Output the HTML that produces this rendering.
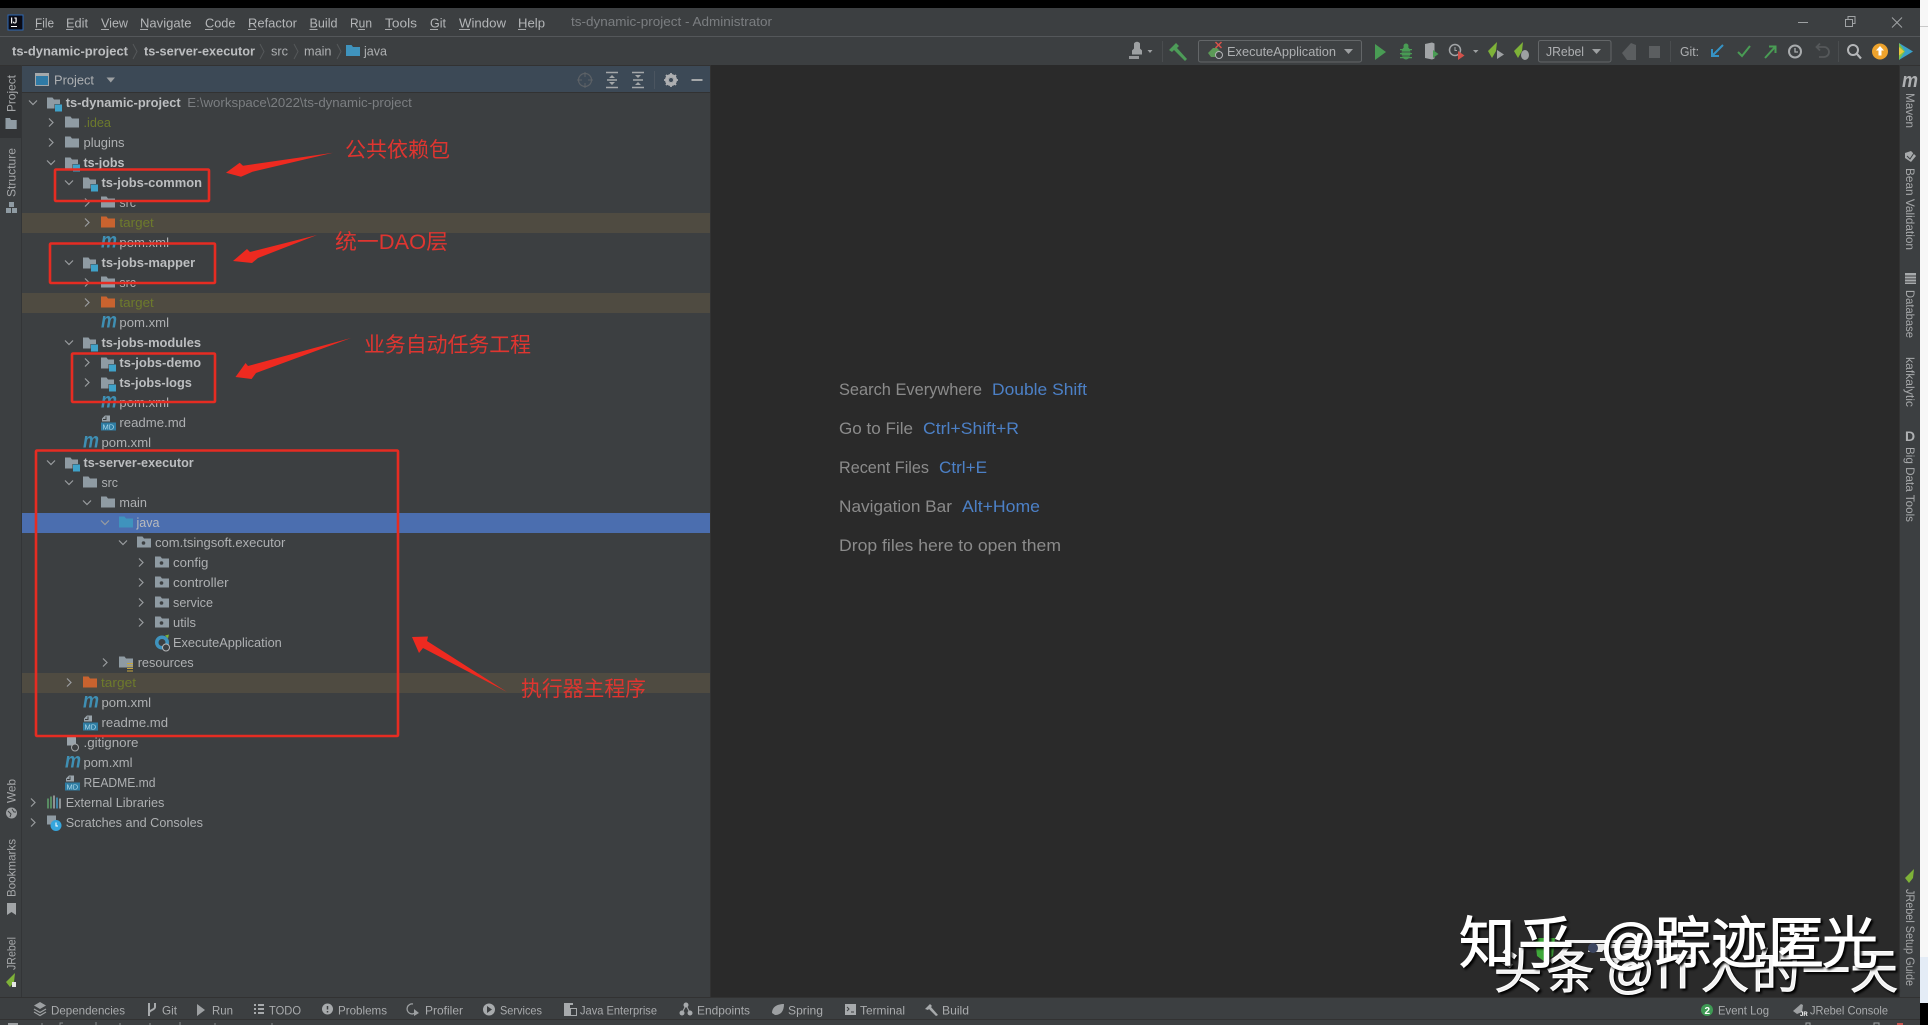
<!DOCTYPE html>
<html lang="zh"><head><meta charset="utf-8"><title>ts-dynamic-project</title>
<style>
html,body{margin:0;padding:0;background:#000;width:1928px;height:1025px;overflow:hidden}
svg{display:block}
text{font-family:"Liberation Sans","Noto Sans CJK SC",sans-serif;white-space:pre}
.t{font-size:13px;fill:#aeb0b2}
.b{font-size:13px;fill:#bcbec0;font-weight:bold}
.g{font-size:13px;fill:#7b7e81}
.o{font-size:13px;fill:#6d7a2c}
.w{font-size:13px;fill:#b9bbbd}
.m{font-size:13px;fill:#b4b6b8}
.s{font-size:12px;fill:#a6a8aa}
.k{font-size:12px;fill:#a9abad}
.c{font-size:17px;fill:#8b8b8b}
.h{font-size:17px;fill:#4c80c6}
.r{font-size:21px;fill:#df3530}
.z{fill:#fff;stroke:#fff;stroke-width:1;filter:drop-shadow(2px 2px 1px #000)}
.cv{fill:none;stroke:#9a9da0;stroke-width:1.2}
</style></head>
<body>
<svg xmlns="http://www.w3.org/2000/svg" width="1928" height="1025" viewBox="0 0 1928 1025">
<defs>
<g id="f"><path d="M0 0h5.5l1.5 2h7v9H0z" fill="#8f9ba3"/></g>
<g id="fo"><path d="M0 0h5.5l1.5 2h7v9H0z" fill="#c9632f"/></g>
<g id="fb"><path d="M0 0h5.5l1.5 2h7v9H0z" fill="#3f93bd"/></g>
<g id="mod"><path d="M0 0h5.5l1.5 2h6v9H0z" fill="#8f9ba3"/><rect x="7.5" y="6.5" width="8" height="8" fill="#3c3f41"/><rect x="8" y="7" width="7" height="7" fill="#3fa2c9"/></g>
<g id="pk"><path d="M0 0h5.5l1.5 2h7v9H0z" fill="#8f9ba3"/><circle cx="6.5" cy="6.5" r="1.8" fill="#3c3f41"/></g>
<g id="d"><text x="-1" y="11" textLength="16" lengthAdjust="spacingAndGlyphs" style="font-size:21px;font-weight:bold;font-style:italic;fill:#3f8fb3">m</text></g>
<g id="md"><path d="M4 0h5v6H1V3z" fill="#9aa4ab"/><path d="M5 1v3H2" fill="none" stroke="#3c3f41"/><rect x="0" y="7" width="15" height="8" fill="#2f7da3"/><text x="1.500" y="14" style="font-size:7.500px;fill:#a9d7ea">MD</text></g>
<g id="dn"><path class="cv" d="M0 0l4 4l4-4"/></g>
<g id="rt"><path class="cv" d="M0 0l4 4l-4 4"/></g>
</defs>

<!-- base -->
<rect width="1928" height="1025" fill="#3c3f41"/>
<rect x="1920" y="0" width="8" height="1003" fill="#f7f7f7"/>
<rect x="1920" y="26" width="8" height="1" fill="#c9c9c9"/>
<rect x="1920" y="957" width="8" height="46" fill="#e4ecf6"/>
<rect x="1920" y="1003" width="8" height="22" fill="#000"/>
<rect width="1920" height="8" fill="#000"/>
<rect x="0" y="36" width="1920" height="1" fill="#54575a"/>
<rect x="0" y="65" width="1920" height="1" fill="#323232"/>
<!-- editor -->
<rect x="711" y="65" width="1188" height="932" fill="#2a2a2a"/>
<rect x="710" y="65" width="1" height="932" fill="#323232"/>
<!-- left stripe -->
<rect x="0" y="66" width="21" height="72" fill="#323436"/>
<rect x="21" y="65" width="1" height="932" fill="#333537"/>
<!-- right stripe -->
<rect x="1899" y="65" width="1" height="932" fill="#323232"/>
<!-- bottom -->
<rect x="0" y="997" width="1920" height="1" fill="#323232"/>
<rect x="0" y="1019" width="1920" height="1" fill="#323232"/>
<!-- project header -->
<rect x="22" y="66" width="688" height="26" fill="#3c4956"/>
<rect x="22" y="92" width="688" height="1" fill="#323232"/>

<!-- Title bar -->
<rect x="8" y="15" width="15" height="15" fill="#0a0a14" stroke="#2b67b5"/>
<text x="10.500" y="23.500" style="font-size:8px;font-weight:bold;fill:#fff">IJ</text>
<rect x="11" y="26" width="6" height="1" fill="#fff"/>
<g class="m">
<text class="m" x="35" y="27.500" textLength="19" lengthAdjust="spacingAndGlyphs">File</text>
<text class="m" x="66" y="27.500" textLength="22" lengthAdjust="spacingAndGlyphs">Edit</text>
<text class="m" x="101" y="27.500" textLength="27" lengthAdjust="spacingAndGlyphs">View</text>
<text class="m" x="140" y="27.500" textLength="51.500" lengthAdjust="spacingAndGlyphs">Navigate</text>
<text class="m" x="205" y="27.500" textLength="30.500" lengthAdjust="spacingAndGlyphs">Code</text>
<text class="m" x="248" y="27.500" textLength="49" lengthAdjust="spacingAndGlyphs">Refactor</text>
<text class="m" x="309.500" y="27.500" textLength="28" lengthAdjust="spacingAndGlyphs">Build</text>
<text class="m" x="350" y="27.500" textLength="22" lengthAdjust="spacingAndGlyphs">Run</text>
<text class="m" x="385" y="27.500" textLength="32" lengthAdjust="spacingAndGlyphs">Tools</text>
<text class="m" x="430" y="27.500" textLength="16" lengthAdjust="spacingAndGlyphs">Git</text>
<text class="m" x="459" y="27.500" textLength="47" lengthAdjust="spacingAndGlyphs">Window</text>
<text class="m" x="518" y="27.500" textLength="27" lengthAdjust="spacingAndGlyphs">Help</text>
</g>
<path d="M35 29.500h7M66 29.500h7M101 29.500h8M140 29.500h8M205 29.500h8M248 29.500h8M309.500 29.500h8M358 29.500h7M385 29.500h7M430 29.500h8M459 29.500h11M518 29.500h8" stroke="#a8aaac" stroke-width="1" fill="none"/>
<text class="g" x="571" y="26" textLength="201" lengthAdjust="spacingAndGlyphs">ts-dynamic-project - Administrator</text>
<path d="M1798 22.500h10" stroke="#9fa2a4" stroke-width="1"/>
<path d="M1845.500 19.500h7v7h-7zM1848 19v-2.500h7v7h-2.500" fill="none" stroke="#a0a3a5" stroke-width="1"/>
<path d="M1892 17.500l10 10M1902 17.500l-10 10" stroke="#a0a3a5" stroke-width="1" fill="none"/>

<!-- Nav bar -->
<text class="b" x="12" y="55.500" textLength="116" lengthAdjust="spacingAndGlyphs">ts-dynamic-project</text>
<path d="M133 44l4 7.500l-4 7.500M260 44l4 7.500l-4 7.500M294 44l4 7.500l-4 7.500M337 44l4 7.500l-4 7.500" fill="none" stroke="#55585a"/>
<text class="b" x="144" y="55.500" textLength="111" lengthAdjust="spacingAndGlyphs">ts-server-executor</text>
<text class="t" x="271" y="55.500" textLength="17" lengthAdjust="spacingAndGlyphs">src</text>
<text class="t" x="304" y="55.500" textLength="27.500" lengthAdjust="spacingAndGlyphs">main</text>
<use href="#fb" x="346" y="45"/>
<text class="t" x="364" y="55.500" textLength="23" lengthAdjust="spacingAndGlyphs">java</text>

<!-- Toolbar -->
<path d="M1134 43.500a3.500 3.500 0 0 1 6 0v5l2 2v4h-10v-4l2-2z" fill="#9da0a2"/><path d="M1129 56h10v3h-10z" fill="#9da0a2" opacity=".9"/>
<path d="M1147.500 50h5l-2.500 3z" fill="#9da0a2"/>
<rect x="1162" y="41" width="1" height="21" fill="#4a4d4f"/>
<path d="M1169 50l7-7l3 3l-2 2l10 11l-2 2l-11-11l-2 2z" fill="#4d9c58"/>
<rect x="1198.500" y="40.500" width="163" height="21.500" rx="2" fill="#3f4244" stroke="#636668"/>
<path d="M1208 53l5-5h4l3 3v2l-5 4h-4z" fill="#5c9a57"/><circle cx="1219" cy="55" r="3.500" fill="#3f4244" stroke="#b4b6b8"/><path d="M1215.500 42l6 6M1221.500 42l-6 6" stroke="#d9524a" stroke-width="1.500"/>
<text class="t" x="1227" y="56" textLength="109" lengthAdjust="spacingAndGlyphs">ExecuteApplication</text>
<path d="M1344 49h9l-4.500 5z" fill="#9da0a2"/>
<path d="M1375 44l11 8l-11 8z" fill="#499c54"/>
<g fill="#499c54"><ellipse cx="1406" cy="53" rx="4.500" ry="6.500"/><circle cx="1406" cy="46" r="2.500"/><path d="M1400 49h12v1.200h-12zM1400 53h12v1.200h-12zM1400 57h12v1.200h-12z"/></g><path d="M1401.500 52h9M1401.500 56h9" stroke="#3c3f41" stroke-width=".8"/>
<path d="M1425 44l7-1.500l2.500 1v15l-2.500 1l-7-1.500z" fill="#a2a5a7"/><path d="M1433 50l5.500 4l-5.500 4z" fill="#499c54"/>
<circle cx="1455" cy="50" r="5.500" fill="none" stroke="#a2a5a7" stroke-width="1.500"/><path d="M1455 47v3.500h2" stroke="#a2a5a7" fill="none"/><path d="M1458 51l6.500 4.500l-6.500 4.500z" fill="#d2514a"/>
<path d="M1473 50h5.500l-2.750 3z" fill="#9da0a2"/>
<path d="M1488 51l9-9l-1 9l-4 7z" fill="#7eb238"/><path d="M1497 50l7 4.500l-7 4.500z" fill="#9da0a2"/>
<path d="M1514 51l9-9l-1 9l-4 7z" fill="#7eb238"/><ellipse cx="1525" cy="55" rx="4" ry="5" fill="#9da0a2"/>
<rect x="1538.500" y="40.500" width="72.500" height="21.500" rx="2" fill="#3f4244" stroke="#636668"/>
<text class="t" x="1546" y="56" textLength="38" lengthAdjust="spacingAndGlyphs">JRebel</text>
<path d="M1592 49h9l-4.500 5z" fill="#9da0a2"/>
<path d="M1622 53l9-10l5 2v15h-9z" fill="#5b5e60"/>
<rect x="1649" y="46" width="11" height="12" fill="#5b5e60"/>
<rect x="1670" y="41" width="1" height="21" fill="#4a4d4f"/>
<text class="t" x="1680" y="56" textLength="19" lengthAdjust="spacingAndGlyphs">Git:</text>
<path d="M1723 45l-10 10M1712 49v7h7" fill="none" stroke="#3592c4" stroke-width="2"/>
<path d="M1738 52l4 4l8-10" fill="none" stroke="#499c54" stroke-width="2"/>
<path d="M1765 58l10-11M1769 46.500h6.500v6.500" fill="none" stroke="#499c54" stroke-width="2"/>
<circle cx="1795" cy="51.500" r="6" fill="none" stroke="#a9acae" stroke-width="2"/><path d="M1795 48v4h3" fill="none" stroke="#a9acae" stroke-width="1.300"/>
<path d="M1817 47h7a4 4 0 0 1 0 10h-5M1820 43.500l-3.500 3.500l3.500 3.500" fill="none" stroke="#55585a" stroke-width="1.800"/>
<rect x="1838" y="41" width="1" height="21" fill="#4a4d4f"/>
<circle cx="1853" cy="50" r="5" fill="none" stroke="#b4b6b8" stroke-width="2"/><path d="M1857 54l4 4.500" stroke="#b4b6b8" stroke-width="2.200"/>
<circle cx="1880" cy="51.500" r="8" fill="#eea32d"/><path d="M1880 46l-4 4.500h2.500v5h3v-5h2.500z" fill="#fff"/>
<path d="M1899 43l14 8.500l-14 8.500z" fill="#3aa0c8"/><path d="M1899 43l6 8.500l-6 8.500z" fill="#7cc34b"/><path d="M1899 47l5 4.500l-5 4z" fill="#ecc73a"/>

<!-- Project header contents -->
<rect x="35.500" y="73.500" width="13" height="12" fill="#2f7aa6" stroke="#a5a8aa"/><rect x="35.500" y="73.500" width="13" height="2.500" fill="#a5a8aa"/>
<text class="t" x="54" y="84.500" textLength="40" lengthAdjust="spacingAndGlyphs">Project</text>
<path d="M106.500 77.500h8.500l-4.250 5z" fill="#9da0a2"/>
<circle cx="585" cy="80" r="6.500" fill="none" stroke="#5c6166" stroke-width="1.200"/><path d="M585 72v5M585 83v5M577 80h5M588 80h5" stroke="#5c6166"/>
<path d="M606 72.500h12M606 87.500h12M607 80h10" stroke="#a4a7a9" stroke-width="1.400" fill="none"/><path d="M612 75l-3 3h6zM612 85l-3-3h6z" fill="#a4a7a9"/>
<path d="M632 72.500h12M632 87.500h12M633 80h10" stroke="#a4a7a9" stroke-width="1.400" fill="none"/><path d="M638 78l-3-3h6zM638 82l-3 3h6z" fill="#a4a7a9"/>
<rect x="654" y="71" width="1" height="18" fill="#4b5560"/>
<circle cx="671" cy="80" r="4.500" fill="none" stroke="#adafb1" stroke-width="3"/><path d="M671 73v14M664 80h14M666 75l10 10M676 75l-10 10" stroke="#adafb1" stroke-width="1.800"/><circle cx="671" cy="80" r="2" fill="#3c4956"/>
<rect x="691.500" y="79" width="11" height="2" fill="#a4a7a9"/>

<!-- Stripe: left -->
<text class="s" transform="translate(15.500,112) rotate(-90)" textLength="37" lengthAdjust="spacingAndGlyphs">Project</text>
<use href="#f" transform="translate(5.500,118) scale(.8 1)"/>
<text class="s" transform="translate(15.500,197) rotate(-90)" textLength="49" lengthAdjust="spacingAndGlyphs">Structure</text>
<path d="M9 202h5v5H9zM6 208h5v5H6zM12 208h5v5h-5z" fill="#8f9ba3"/>
<text class="s" transform="translate(15.500,803) rotate(-90)" textLength="24" lengthAdjust="spacingAndGlyphs">Web</text>
<circle cx="11.500" cy="813" r="5.500" fill="#9da0a2"/><path d="M8 811l3 3l-1 3M12 809l2 3l2 0" stroke="#3c3f41" fill="none"/>
<text class="s" transform="translate(15.500,897) rotate(-90)" textLength="58" lengthAdjust="spacingAndGlyphs">Bookmarks</text>
<path d="M7 903h9v12l-4.500-3l-4.500 3z" fill="#a2a5a7"/>
<text class="s" transform="translate(15.500,970) rotate(-90)" textLength="33" lengthAdjust="spacingAndGlyphs">JRebel</text>
<path d="M6 982l9-9l-1 9l-4 5z" fill="#7eb238"/><rect x="12" y="982" width="4" height="5" fill="#e6e6e6"/>

<!-- Stripe: right -->
<text x="1902" y="87" textLength="16" lengthAdjust="spacingAndGlyphs" style="font-size:20px;font-weight:bold;font-style:italic;fill:#aeb0b2">m</text>
<text class="s" transform="translate(1906,93) rotate(90)" textLength="35" lengthAdjust="spacingAndGlyphs">Maven</text>
<path d="M1905 153l6-2l5 5l-5 6l-6-4z" fill="#a7aaac"/><path d="M1907 156l3 3l4-6" stroke="#3c3f41" fill="none"/>
<text class="s" transform="translate(1906,168) rotate(90)" textLength="82" lengthAdjust="spacingAndGlyphs">Bean Validation</text>
<path d="M1905 273h11v11h-11z" fill="#a7aaac"/><path d="M1905 276h11M1905 279h11M1905 282h11" stroke="#3c3f41"/>
<text class="s" transform="translate(1906,290) rotate(90)" textLength="48" lengthAdjust="spacingAndGlyphs">Database</text>
<text class="s" transform="translate(1906,357) rotate(90)" textLength="50" lengthAdjust="spacingAndGlyphs">kafkalytic</text>
<text x="1905" y="441" style="font-size:14px;font-weight:bold;fill:#aeb0b2">D</text>
<text class="s" transform="translate(1906,447) rotate(90)" textLength="75" lengthAdjust="spacingAndGlyphs">Big Data Tools</text>
<path d="M1905 878l9-9l-1 9l-4 5z" fill="#7eb238"/>
<text class="s" transform="translate(1906,889) rotate(90)" textLength="97" lengthAdjust="spacingAndGlyphs">JRebel Setup Guide</text>

<!-- Tree highlights -->
<rect x="22" y="213" width="688" height="20" fill="#4f4b41"/>
<rect x="22" y="293" width="688" height="20" fill="#4f4b41"/>
<rect x="22" y="673" width="688" height="20" fill="#4f4b41"/>
<rect x="22" y="513" width="688" height="20" fill="#4b6eaf"/>

<!-- Tree rows -->
<g transform="translate(0,-0.5)">
<use href="#dn" x="29" y="101"/><use href="#mod" x="47" y="98"/>
<text class="b" x="65.700" y="107.500" textLength="115" lengthAdjust="spacingAndGlyphs">ts-dynamic-project</text>
<text class="g" x="187.300" y="107.500" textLength="224.500" lengthAdjust="spacingAndGlyphs">E:\workspace\2022\ts-dynamic-project</text>

<use href="#rt" x="49" y="119"/><use href="#f" x="65" y="117"/>
<text class="o" x="83.500" y="127.500" textLength="27.500" lengthAdjust="spacingAndGlyphs">.idea</text>
<use href="#rt" x="49" y="139"/><use href="#f" x="65" y="137"/>
<text class="t" x="83.500" y="147.500" textLength="41" lengthAdjust="spacingAndGlyphs">plugins</text>
<use href="#dn" x="47" y="161"/><use href="#mod" x="65" y="158"/>
<text class="b" x="83.500" y="167.500" textLength="41" lengthAdjust="spacingAndGlyphs">ts-jobs</text>
<use href="#dn" x="65" y="181"/><use href="#mod" x="83" y="178"/>
<text class="b" x="101.500" y="187.500" textLength="100.500" lengthAdjust="spacingAndGlyphs">ts-jobs-common</text>
<use href="#rt" x="85" y="199"/><use href="#f" x="101" y="197"/>
<text class="t" x="119.400" y="207.500" textLength="16.600" lengthAdjust="spacingAndGlyphs">src</text>
<use href="#rt" x="85" y="219"/><use href="#fo" x="101" y="217"/>
<text class="o" x="119.400" y="227.500" textLength="34.400" lengthAdjust="spacingAndGlyphs">target</text>
<use href="#d" x="102" y="237"/>
<text class="t" x="119.400" y="247.500" textLength="49.600" lengthAdjust="spacingAndGlyphs">pom.xml</text>
<use href="#dn" x="65" y="261"/><use href="#mod" x="83" y="258"/>
<text class="b" x="101.500" y="267.500" textLength="93.700" lengthAdjust="spacingAndGlyphs">ts-jobs-mapper</text>
<use href="#rt" x="85" y="279"/><use href="#f" x="101" y="277"/>
<text class="t" x="119.400" y="287.500" textLength="16.600" lengthAdjust="spacingAndGlyphs">src</text>
<use href="#rt" x="85" y="299"/><use href="#fo" x="101" y="297"/>
<text class="o" x="119.400" y="307.500" textLength="34.400" lengthAdjust="spacingAndGlyphs">target</text>
<use href="#d" x="102" y="317"/>
<text class="t" x="119.400" y="327.500" textLength="49.600" lengthAdjust="spacingAndGlyphs">pom.xml</text>
<use href="#dn" x="65" y="341"/><use href="#mod" x="83" y="338"/>
<text class="b" x="101.500" y="347.500" textLength="99.600" lengthAdjust="spacingAndGlyphs">ts-jobs-modules</text>
<use href="#rt" x="85" y="359"/><use href="#mod" x="101" y="358"/>
<text class="b" x="119.400" y="367.500" textLength="81.700" lengthAdjust="spacingAndGlyphs">ts-jobs-demo</text>
<use href="#rt" x="85" y="379"/><use href="#mod" x="101" y="378"/>
<text class="b" x="119.400" y="387.500" textLength="72.500" lengthAdjust="spacingAndGlyphs">ts-jobs-logs</text>
<use href="#d" x="102" y="397"/>
<text class="t" x="119.400" y="407.500" textLength="49.600" lengthAdjust="spacingAndGlyphs">pom.xml</text>
<use href="#md" x="101" y="416"/>
<text class="t" x="119.400" y="427.500" textLength="66.600" lengthAdjust="spacingAndGlyphs">readme.md</text>
<use href="#d" x="84" y="437"/>
<text class="t" x="101.500" y="447.500" textLength="49.600" lengthAdjust="spacingAndGlyphs">pom.xml</text>
<use href="#dn" x="47" y="461"/><use href="#mod" x="65" y="458"/>
<text class="b" x="83.500" y="467.500" textLength="110.200" lengthAdjust="spacingAndGlyphs">ts-server-executor</text>
<use href="#dn" x="65" y="481"/><use href="#f" x="83" y="477"/>
<text class="t" x="101.500" y="487.500" textLength="16.500" lengthAdjust="spacingAndGlyphs">src</text>
<use href="#dn" x="83" y="501"/><use href="#f" x="101" y="497"/>
<text class="t" x="119.400" y="507.500" textLength="27.500" lengthAdjust="spacingAndGlyphs">main</text>
<use href="#dn" x="101" y="521"/><use href="#fb" x="119" y="517"/>
<text class="w" x="136.500" y="527.500" textLength="23" lengthAdjust="spacingAndGlyphs">java</text>
<use href="#dn" x="119" y="541"/><use href="#pk" x="137" y="537"/>
<text class="t" x="155" y="547.500" textLength="130.400" lengthAdjust="spacingAndGlyphs">com.tsingsoft.executor</text>
<use href="#rt" x="139" y="559"/><use href="#pk" x="155" y="557"/>
<text class="t" x="173" y="567.500" textLength="35.400" lengthAdjust="spacingAndGlyphs">config</text>
<use href="#rt" x="139" y="579"/><use href="#pk" x="155" y="577"/>
<text class="t" x="173" y="587.500" textLength="55.600" lengthAdjust="spacingAndGlyphs">controller</text>
<use href="#rt" x="139" y="599"/><use href="#pk" x="155" y="597"/>
<text class="t" x="173" y="607.500" textLength="40" lengthAdjust="spacingAndGlyphs">service</text>
<use href="#rt" x="139" y="619"/><use href="#pk" x="155" y="617"/>
<text class="t" x="173" y="627.500" textLength="23" lengthAdjust="spacingAndGlyphs">utils</text>
<circle cx="162" cy="643" r="7" fill="#3f93bd"/><circle cx="162" cy="643" r="3.500" fill="#3c3f41"/><path d="M165 636l4-1l-1 4z" fill="#7eb238"/><circle cx="166" cy="648" r="3.500" fill="#3c3f41" stroke="#b4b6b8"/>
<text class="t" x="173" y="647.500" textLength="108.800" lengthAdjust="spacingAndGlyphs">ExecuteApplication</text>
<use href="#rt" x="103" y="659"/><use href="#f" x="119" y="657"/><path d="M127 664h6M127 666.500h6M127 669h6M127 671.500h6" stroke="#c7a53b"/>
<text class="t" x="137.700" y="667.500" textLength="56" lengthAdjust="spacingAndGlyphs">resources</text>
<use href="#rt" x="67" y="679"/><use href="#fo" x="83" y="677"/>
<text class="o" x="101" y="687.500" textLength="35" lengthAdjust="spacingAndGlyphs">target</text>
<use href="#d" x="84" y="697"/>
<text class="t" x="101.500" y="707.500" textLength="49.600" lengthAdjust="spacingAndGlyphs">pom.xml</text>
<use href="#md" x="83" y="716"/>
<text class="t" x="101.500" y="727.500" textLength="66.600" lengthAdjust="spacingAndGlyphs">readme.md</text>
<path d="M69 736h5l2 2v8h-9v-8z" fill="#9aa4ab"/><circle cx="75" cy="748" r="3.500" fill="#3c3f41" stroke="#a5a8aa"/>
<text class="t" x="83.500" y="747.500" textLength="55" lengthAdjust="spacingAndGlyphs">.gitignore</text>
<use href="#d" x="66" y="757"/>
<text class="t" x="83.500" y="767.500" textLength="49" lengthAdjust="spacingAndGlyphs">pom.xml</text>
<use href="#md" x="65" y="776"/>
<text class="t" x="83.500" y="787.500" textLength="72" lengthAdjust="spacingAndGlyphs">README.md</text>
<use href="#rt" x="31" y="799"/>
<path d="M48 799v10M51 797v12" stroke="#5f9e6a" stroke-width="1.600"/><path d="M54 796v13M60 799v10" stroke="#a4a7a9" stroke-width="1.600"/><path d="M57 798v11" stroke="#3f93bd" stroke-width="1.600"/>
<text class="t" x="65.700" y="807.500" textLength="98.700" lengthAdjust="spacingAndGlyphs">External Libraries</text>
<use href="#rt" x="31" y="819"/>
<path d="M47 816h9v9h-9z" fill="#8f9ba3"/><circle cx="56" cy="826" r="5.500" fill="#35a5dc"/><path d="M56 823v3.500h2" stroke="#fff" fill="none"/>
<text class="t" x="65.700" y="827.500" textLength="137.300" lengthAdjust="spacingAndGlyphs">Scratches and Consoles</text>
</g>

<!-- Center hints -->
<text class="c" x="839" y="395" textLength="143" lengthAdjust="spacingAndGlyphs">Search Everywhere</text>
<text class="h" x="992" y="395" textLength="95" lengthAdjust="spacingAndGlyphs">Double Shift</text>
<text class="c" x="839" y="434" textLength="74" lengthAdjust="spacingAndGlyphs">Go to File</text>
<text class="h" x="923" y="434" textLength="96" lengthAdjust="spacingAndGlyphs">Ctrl+Shift+R</text>
<text class="c" x="839" y="473" textLength="90" lengthAdjust="spacingAndGlyphs">Recent Files</text>
<text class="h" x="939" y="473" textLength="48" lengthAdjust="spacingAndGlyphs">Ctrl+E</text>
<text class="c" x="839" y="512" textLength="113" lengthAdjust="spacingAndGlyphs">Navigation Bar</text>
<text class="h" x="962" y="512" textLength="78" lengthAdjust="spacingAndGlyphs">Alt+Home</text>
<text class="c" x="839" y="551" textLength="222" lengthAdjust="spacingAndGlyphs">Drop files here to open them</text>

<!-- Bottom tool buttons -->
<path d="M40 1002l6 3.500l-6 3.500l-6-3.500z" fill="#9da0a2"/><path d="M34 1009l6 3.500l6-3.500M34 1012l6 3.500l6-3.500" fill="none" stroke="#9da0a2" stroke-width="1.300"/>
<text class="k" x="51" y="1014.500" textLength="74" lengthAdjust="spacingAndGlyphs">Dependencies</text>
<path d="M149 1003v13M155 1003v4c0 3-6 3-6 6" fill="none" stroke="#a7aaac" stroke-width="2"/>
<text class="k" x="162" y="1014.500" textLength="15" lengthAdjust="spacingAndGlyphs">Git</text>
<path d="M197 1004l8 6l-8 6z" fill="#9da0a2"/>
<text class="k" x="212" y="1014.500" textLength="21" lengthAdjust="spacingAndGlyphs">Run</text>
<path d="M254 1005h2M254 1009h2M254 1013h2M258 1005h6M258 1009h6M258 1013h6" stroke="#a7aaac" stroke-width="2"/>
<text class="k" x="269" y="1014.500" textLength="32" lengthAdjust="spacingAndGlyphs">TODO</text>
<circle cx="327.500" cy="1009" r="5.500" fill="#a7aaac"/><path d="M327.500 1006v3.500M327.500 1011v1.500" stroke="#3c3f41" stroke-width="1.500"/>
<text class="k" x="338" y="1014.500" textLength="49" lengthAdjust="spacingAndGlyphs">Problems</text>
<path d="M413 1004a5 5 0 1 0 3 8" fill="none" stroke="#9da0a2" stroke-width="1.300"/><path d="M414 1009l5 4l-5 3z" fill="#9da0a2"/>
<text class="k" x="425" y="1014.500" textLength="38" lengthAdjust="spacingAndGlyphs">Profiler</text>
<circle cx="489" cy="1009.500" r="6" fill="#a7aaac"/><path d="M487 1006l5 3.500l-5 3.500z" fill="#3c3f41"/>
<text class="k" x="500" y="1014.500" textLength="42" lengthAdjust="spacingAndGlyphs">Services</text>
<path d="M564 1003h9v2h-9zM564 1005h6v11h-6z" fill="#a7aaac"/><rect x="570.500" y="1008.500" width="6" height="7" fill="#3c3f41" stroke="#a7aaac"/>
<text class="k" x="580" y="1014.500" textLength="77" lengthAdjust="spacingAndGlyphs">Java Enterprise</text>
<circle cx="682" cy="1013" r="2.500" fill="#a7aaac"/><circle cx="690" cy="1013" r="2.500" fill="#a7aaac"/><circle cx="686" cy="1005" r="2.500" fill="#a7aaac"/><path d="M682 1013l4-8l4 8" fill="none" stroke="#a7aaac"/>
<text class="k" x="697" y="1014.500" textLength="53" lengthAdjust="spacingAndGlyphs">Endpoints</text>
<path d="M772 1013c0-6 5-9 12-9c0 7-3 11-9 11z" fill="#9da0a2"/>
<text class="k" x="788" y="1014.500" textLength="35" lengthAdjust="spacingAndGlyphs">Spring</text>
<rect x="845" y="1004" width="11" height="11" fill="#a7aaac"/><path d="M847 1007l2 2l-2 2M851 1012h3" stroke="#3c3f41" fill="none"/>
<text class="k" x="860" y="1014.500" textLength="45" lengthAdjust="spacingAndGlyphs">Terminal</text>
<path d="M925 1009l5-5l2 2l-1 1l7 8l-2 1l-7-7l-1 1z" fill="#a7aaac"/>
<text class="k" x="942" y="1014.500" textLength="27" lengthAdjust="spacingAndGlyphs">Build</text>
<circle cx="1707" cy="1010" r="6" fill="#3f9b55"/><text x="1704.500" y="1014" style="font-size:10px;font-weight:bold;fill:#fff">2</text>
<text class="k" x="1718" y="1014.500" textLength="51" lengthAdjust="spacingAndGlyphs">Event Log</text>
<path d="M1793 1011l8-7l2 1l-1 7l-5 2z" fill="#9da0a2"/><text x="1800" y="1016" style="font-size:6px;font-weight:bold;fill:#fff">JR</text>
<text class="k" x="1810" y="1014.500" textLength="78" lengthAdjust="spacingAndGlyphs">JRebel Console</text>
<!-- clipped status bar -->
<rect x="8" y="1023" width="10" height="2" fill="#9da0a2"/>
<path d="M42 1025v-2M60 1025v-2h3M96 1025v-3M120 1025v-2M150 1025v-2M180 1025v-3M215 1025v-2M272 1025v-2" stroke="#85888a" fill="none"/>
<path d="M1806 1025v-2h4v2M1874 1025v-2h5v2" stroke="#9da0a2" fill="none"/>
<rect x="1897" y="1023" width="6" height="2" fill="#c75450"/>

<!-- Annotations -->
<g fill="none" stroke="#e62c22" stroke-width="2.600">
<rect x="55" y="169.500" width="154" height="31.500" rx="1"/>
<rect x="50" y="243.500" width="165" height="39.500" rx="1"/>
<rect x="72" y="353.500" width="143" height="48.500" rx="1"/>
<rect x="36" y="450.500" width="362" height="285.500" rx="1"/>
</g>
<g fill="#ee2a20">
<polygon points="226,172.700 239.700,162.700 243,165.700 333,152.700 252.500,171.700 241,176.700"/>
<polygon points="233,261 247,249 250,252 317,235 258,258 252,263"/>
<polygon points="235.500,377 245.600,363 248,366 351,338 256,373 251.600,379"/>
<polygon points="412,637 428,636.500 427,641 507,692 423,648 419,653"/>
</g>
<text class="r" x="345" y="157" textLength="105" lengthAdjust="spacingAndGlyphs">公共依赖包</text>
<text class="r" x="335" y="249" textLength="113" lengthAdjust="spacingAndGlyphs">统一DAO层</text>
<text class="r" x="364" y="352" textLength="167" lengthAdjust="spacingAndGlyphs">业务自动任务工程</text>
<text class="r" x="521" y="696" textLength="125" lengthAdjust="spacingAndGlyphs">执行器主程序</text>

<!-- Watermarks -->
<text class="z" style="font-size:48px;fill:#f2f2f2" y="988" x="1494 1546 1595 1606 1657 1668 1701 1752 1802 1850">头条 @IT人的一天</text>
<path d="M1535 938h20l-2 18l-8 6l-8-6z" fill="#3fa83a"/>
<path d="M1565 940h120v3h-120z" fill="#f2f2f2"/>
<path d="M1590 944h18l-6 8h-14zM1610 944h60v4h-60zM1600 958h30v3h-30z" fill="#e6e6e6"/>
<circle cx="1593" cy="948" r="5" fill="#3b4560"/>
<text class="z" style="font-size:56px" y="963" x="1459 1518 1575 1600 1655 1711 1768 1822">知乎 @踪迹匿光</text>
</svg>
</body></html>
